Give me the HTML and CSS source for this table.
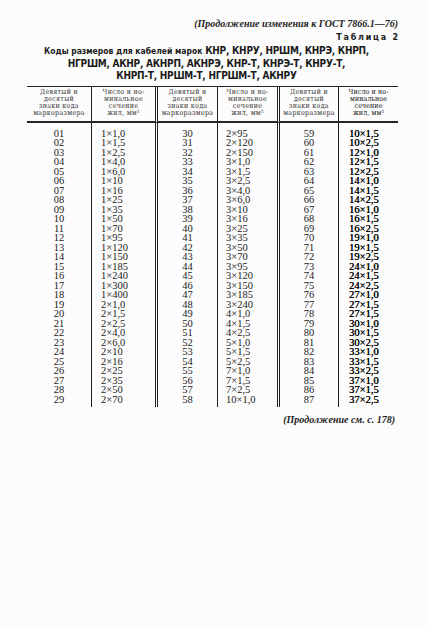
FILE: index.html
```html
<!DOCTYPE html>
<html lang="ru">
<head>
<meta charset="utf-8">
<title>Таблица 2</title>
<link rel="stylesheet" href="styles.css">
</head>
<body>
<div class="page">
  <div class="cont">(Продолжение изменения к ГОСТ 7866.1—76)</div>
  <div class="tabno">Таблица 2</div>
  <h1 class="title">
    <span class="line"><span class="lead">Коды размеров для кабелей марок</span> КНР, КНРУ, НРШМ, КНРЭ, КНРП,</span>
    <span class="line">НГРШМ, АКНР, АКНРП, АКНРЭ, КНР-Т, КНРЭ-Т, КНРУ-Т,</span>
    <span class="line">КНРП-Т, НРШМ-Т, НГРШМ-Т, АКНРУ</span>
  </h1>
  <div class="table">
    <div class="hd c1">Девятый и<br>десятый<br>знаки кода<br>маркоразмера</div>
    <div class="hd c2">Число и но-<br>минальное<br>сечение<br>жил, мм²</div>
    <div class="hd c3 dbl">Девятый и<br>десятый<br>знаки кода<br>маркоразмера</div>
    <div class="hd c4">Число и но-<br>минальное<br>сечение<br>жил, мм²</div>
    <div class="hd c5 dbl">Девятый и<br>десятый<br>знаки кода<br>маркоразмера</div>
    <div class="hd c6 strong">Число и но-<br>минальное<br>сечение<br>жил, мм²</div>

    <div class="bd code c1">01<br>02<br>03<br>04<br>05<br>06<br>07<br>08<br>09<br>10<br>11<br>12<br>13<br>14<br>15<br>16<br>17<br>18<br>19<br>20<br>21<br>22<br>23<br>24<br>25<br>26<br>27<br>28<br>29</div>
    <div class="bd val c2">1×1,0<br>1×1,5<br>1×2,5<br>1×4,0<br>1×6,0<br>1×10<br>1×16<br>1×25<br>1×35<br>1×50<br>1×70<br>1×95<br>1×120<br>1×150<br>1×185<br>1×240<br>1×300<br>1×400<br>2×1,0<br>2×1,5<br>2×2,5<br>2×4,0<br>2×6,0<br>2×10<br>2×16<br>2×25<br>2×35<br>2×50<br>2×70</div>
    <div class="bd code c3 dbl">30<br>31<br>32<br>33<br>34<br>35<br>36<br>37<br>38<br>39<br>40<br>41<br>42<br>43<br>44<br>45<br>46<br>47<br>48<br>49<br>50<br>51<br>52<br>53<br>54<br>55<br>56<br>57<br>58</div>
    <div class="bd val c4">2×95<br>2×120<br>2×150<br>3×1,0<br>3×1,5<br>3×2,5<br>3×4,0<br>3×6,0<br>3×10<br>3×16<br>3×25<br>3×35<br>3×50<br>3×70<br>3×95<br>3×120<br>3×150<br>3×185<br>3×240<br>4×1,0<br>4×1,5<br>4×2,5<br>5×1,0<br>5×1,5<br>5×2,5<br>7×1,0<br>7×1,5<br>7×2,5<br>10×1,0</div>
    <div class="bd code c5 dbl">59<br>60<br>61<br>62<br>63<br>64<br>65<br>66<br>67<br>68<br>69<br>70<br>71<br>72<br>73<br>74<br>75<br>76<br>77<br>78<br>79<br>80<br>81<br>82<br>83<br>84<br>85<br>86<br>87</div>
    <div class="bd val c6 strong">10×1,5<br>10×2,5<br>12×1,0<br>12×1,5<br>12×2,5<br>14×1,0<br>14×1,5<br>14×2,5<br>16×1,0<br>16×1,5<br>16×2,5<br>19×1,0<br>19×1,5<br>19×2,5<br>24×1,0<br>24×1,5<br>24×2,5<br>27×1,0<br>27×1,5<br>27×1,5<br>30×1,0<br>30×1,5<br>30×2,5<br>33×1,0<br>33×1,5<br>33×2,5<br>37×1,0<br>37×1,5<br>37×2,5</div>
  </div>
  <div class="foot">(Продолжение см. с. 178)</div>
</div>
</body>
</html>
```

FILE: styles.css
```css
html, body {
  margin: 0;
  padding: 0;
  background: #fcfcfc;
}
.page {
  width: 427px;
  height: 627px;
  padding: 17px 29px 0 27px;
  box-sizing: border-box;
  color: #1a1a1a;
  font-family: "Liberation Serif", "DejaVu Serif", serif;
}
.cont {
  text-align: right;
  font-style: italic;
  font-weight: bold;
  font-size: 10px;
  line-height: 13px;
  color: #222;
}
.tabno {
  text-align: right;
  font-family: "DejaVu Sans", sans-serif;
  font-size: 8px;
  font-weight: bold;
  letter-spacing: 1.8px;
  line-height: 13px;
  margin-top: 1px;
  margin-right: -2px;
}
.title {
  margin: 0;
  display: flex;
  flex-direction: column;
  align-items: center;
  font-family: "DejaVu Sans Condensed", "DejaVu Sans", sans-serif;
  font-weight: bold;
  font-size: 10px;
  letter-spacing: -0.25px;
  line-height: 12.5px;
  color: #1a1a1a;
  padding-right: 12px;
  padding-top: 1px;
}
.title .line {
  white-space: nowrap;
}
.title .lead {
  font-size: 8.5px;
  letter-spacing: 0;
}
.table {
  display: grid;
  grid-template-columns: 64px 64px 62px 60px 61px 60px;
  grid-template-rows: 36px auto;
  border-top: 1.5px solid #222;
  margin-top: 3px;
}
.hd {
  font-family: "DejaVu Serif Condensed", "DejaVu Serif", serif;
  font-size: 7px;
  line-height: 7px;
  letter-spacing: 0.3px;
  text-align: center;
  padding-top: 2px;
  border-bottom: 2px solid #262626;
  color: #333;
  white-space: nowrap;
}
.hd.strong {
  color: #111;
  letter-spacing: 0.1px;
}
.c2, .c4, .c6 {
  border-left: 1px solid #222;
}
.dbl {
  border-left: 3px double #222;
}
.bd {
  font-size: 10.5px;
  line-height: 9.5px;
  padding-top: 6px;
  padding-bottom: 3px;
}
.code {
  text-align: center;
}
.val {
  text-align: left;
}
.val.c2 {
  padding-left: 9px;
}
.val.c4 {
  padding-left: 8px;
}
.val.c6 {
  padding-left: 10px;
}
.strong.val {
  color: #000;
  text-shadow: 0.35px 0 0 #000;
}
.foot {
  text-align: right;
  font-style: italic;
  font-weight: bold;
  font-size: 10px;
  line-height: 13px;
  margin-top: 6px;
  padding-right: 3px;
}
```
